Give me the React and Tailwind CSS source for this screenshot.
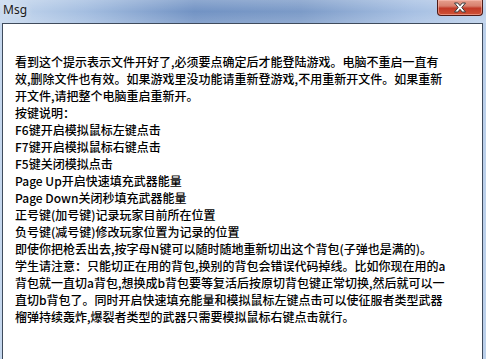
import React from "react";

const lines = [
  "看到这个提示表示文件开好了,必须要点确定后才能登陆游戏。电脑不重启一直有",
  "效,删除文件也有效。如果游戏里没功能请重新登游戏,不用重新开文件。如果重新",
  "开文件,请把整个电脑重启重新开。",
  "按键说明：",
  "F6键开启模拟鼠标左键点击",
  "F7键开启模拟鼠标右键点击",
  "F5键关闭模拟点击",
  "Page Up开启快速填充武器能量",
  "Page Down关闭秒填充武器能量",
  "正号键(加号键)记录玩家目前所在位置",
  "负号键(减号键)修改玩家位置为记录的位置",
  "即使你把枪丢出去,按字母N键可以随时随地重新切出这个背包(子弹也是满的)。",
  "学生请注意：只能切正在用的背包,换别的背包会错误代码掉线。比如你现在用的a",
  "背包就一直切a背包,想换成b背包要等复活后按原切背包键正常切换,然后就可以一",
  "直切b背包了。同时开启快速填充能量和模拟鼠标左键点击可以使征服者类型武器",
  "榴弹持续轰炸,爆裂者类型的武器只需要模拟鼠标右键点击就行。",
];

const CloseButton = () => (
  <div className="w-[46px] h-[16px] rounded-b-[4px] border border-t-0 border-[#4e1a15] bg-[linear-gradient(180deg,#e7a08e_0%,#d8806e_40%,#c23a27_55%,#cf5236_100%)] flex items-center justify-center shadow-[inset_0_0_0_1px_rgba(255,200,190,0.5)]">
    <svg width="14" height="11" viewBox="0 0 14 11">
      <path
        d="M1.5 1 H4.8 L7 3.7 L9.2 1 H12.5 L8.8 5.5 L12.5 10 H9.2 L7 7.3 L4.8 10 H1.5 L5.2 5.5 Z"
        fill="#ffffff"
        stroke="#3a3a3a"
        strokeWidth="1"
        strokeLinejoin="round"
      />
    </svg>
  </div>
);

const App = () => {
  return (
    <div className="w-[486px] h-[359px] overflow-hidden flex flex-col bg-[linear-gradient(90deg,#c6d8ee_0%,#a3bde0_18%,#7293c4_40%,#7c9bc8_62%,#a7c0e3_85%,#bcd0ea_100%)]">
      {/* title bar */}
      <div className="h-[23px] flex items-start justify-between pl-[3px] pr-[3px] bg-[linear-gradient(180deg,rgba(255,255,255,0.2)_0%,rgba(255,255,255,0)_50%,rgba(255,255,255,0.15)_100%)]">
        <span
          className="mt-[3px] text-[12px] leading-[14px] text-[#1a1a1a]"
          style={{ fontFamily: '"Noto Sans", "Liberation Sans", sans-serif', textShadow: "0 0 6px rgba(255,255,255,0.9)" }}
        >
          Msg
        </span>
        <CloseButton />
      </div>

      {/* client area */}
      <div className="flex-1 ml-[2px] mr-[3px] border border-[#3f4b5c] border-b-0 bg-white pl-[12px] pt-[29px]">
        <div
          className="text-[12px] leading-[17px] font-medium text-black whitespace-nowrap"
          style={{ fontFamily: '"Noto Sans CJK SC", "Noto Sans", sans-serif' }}
        >
          {lines.map((line, i) => (
            <div key={i}>{line}</div>
          ))}
        </div>
      </div>
    </div>
  );
};

export default App;
